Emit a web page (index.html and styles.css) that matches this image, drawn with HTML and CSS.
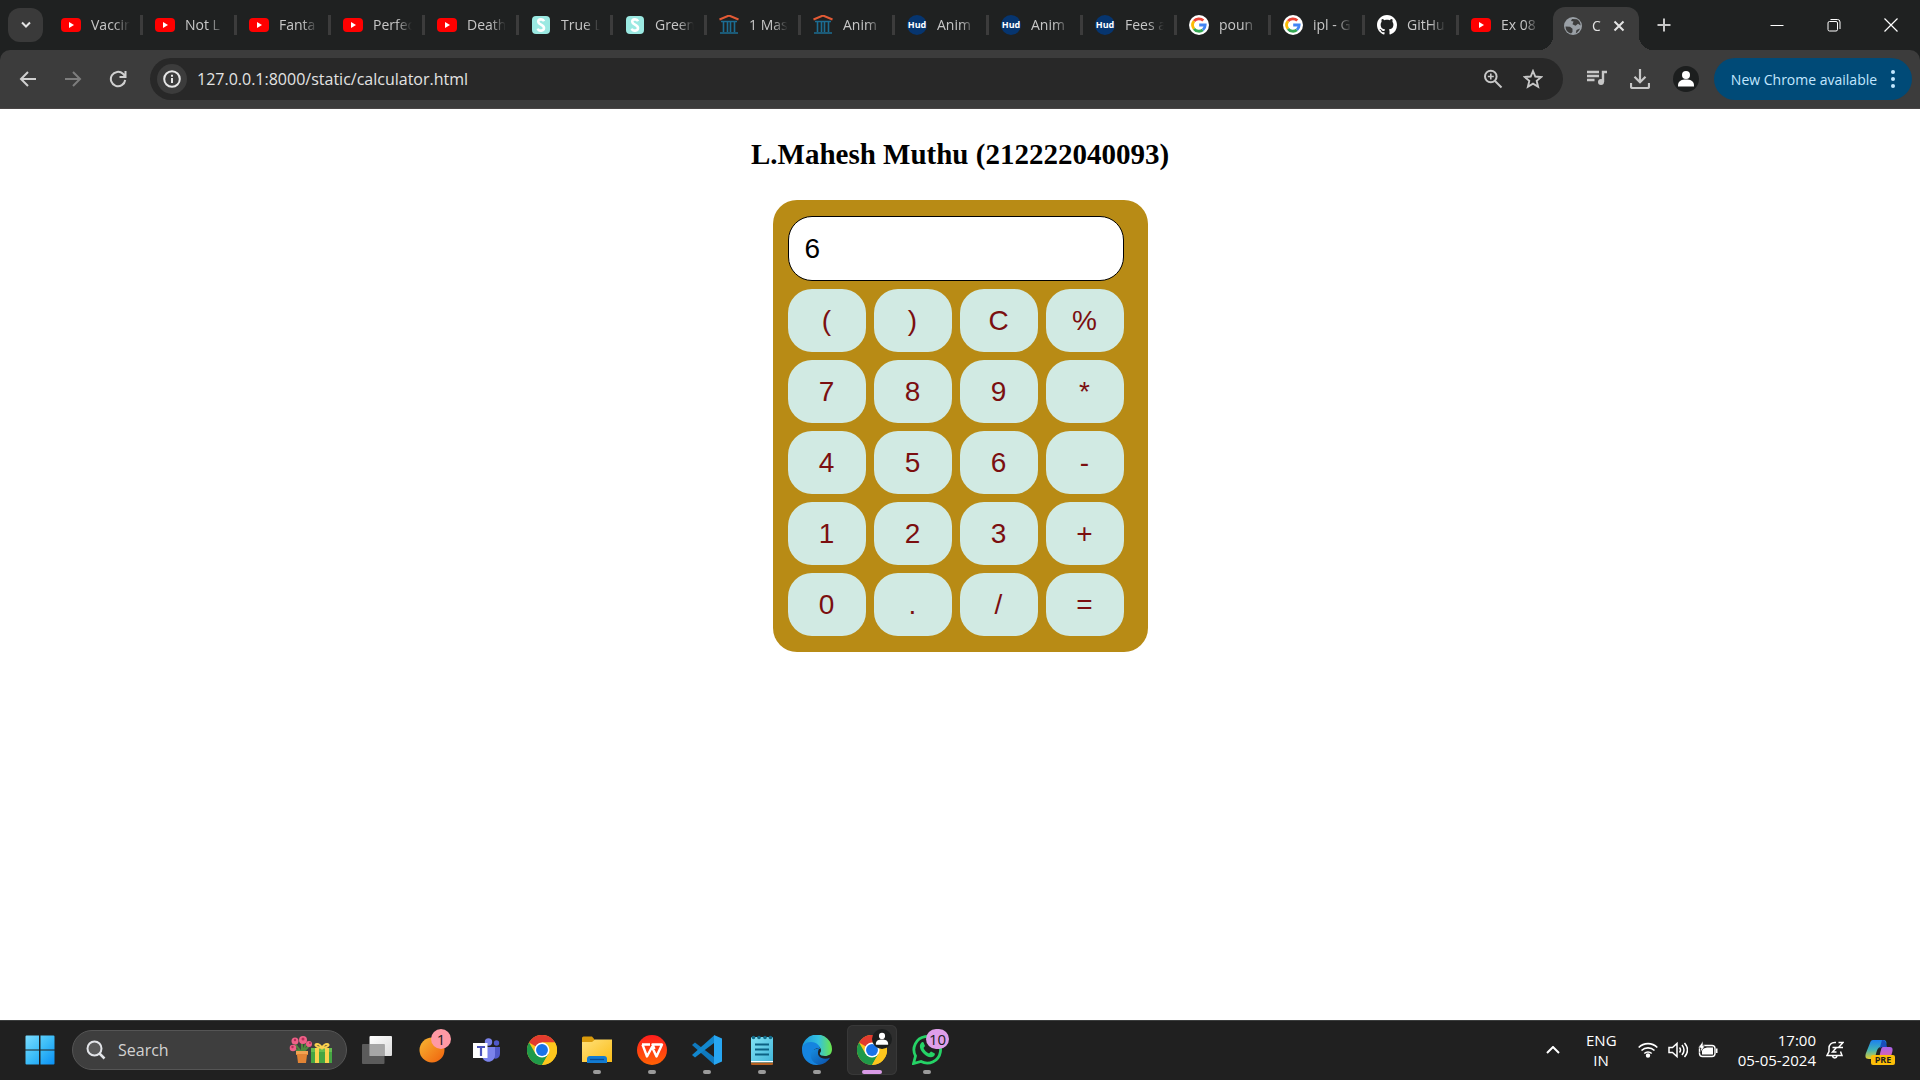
FILE: index.html
```html
<!DOCTYPE html>
<html lang="en">
<head>
<meta charset="utf-8">
<meta name="viewport" content="width=device-width, initial-scale=1">
<title>Calculator</title>
<link rel="stylesheet" href="styles.css">
</head>
<body>
<svg class="sprite" aria-hidden="true">
  <defs>
    <linearGradient id="win" x1="0" y1="0" x2="1" y2="1"><stop offset="0" stop-color="#7bdcff"/><stop offset=".5" stop-color="#3cbdf8"/><stop offset="1" stop-color="#0a90f5"/></linearGradient>
    <linearGradient id="sheet" x1="0" y1="0" x2="1" y2="1"><stop offset="0" stop-color="#fff"/><stop offset="1" stop-color="#dcdcdc"/></linearGradient>
    <linearGradient id="orange" x1="0" y1="0" x2="1" y2="1"><stop offset="0" stop-color="#f7b733"/><stop offset="1" stop-color="#f0600c"/></linearGradient>
    <linearGradient id="folder" x1="0" y1="0" x2="1" y2="1"><stop offset="0" stop-color="#ffe07a"/><stop offset="1" stop-color="#fbbd17"/></linearGradient>
    <linearGradient id="wpsred" x1="0" y1="0" x2="0" y2="1"><stop offset="0" stop-color="#ff1d1d"/><stop offset="1" stop-color="#ff6204"/></linearGradient>
    <linearGradient id="pad" x1="0" y1="0" x2="1" y2="1"><stop offset="0" stop-color="#82e2f4"/><stop offset="1" stop-color="#3fb4d8"/></linearGradient>
    <linearGradient id="edgetop" x1="0" y1="0" x2="1" y2="0"><stop offset="0" stop-color="#1795dc"/><stop offset=".55" stop-color="#35c1e0"/><stop offset="1" stop-color="#6be74a"/></linearGradient>
    <linearGradient id="edgelow" x1="0" y1="0" x2="1" y2="1"><stop offset="0" stop-color="#168de0"/><stop offset="1" stop-color="#0b4fa8"/></linearGradient>
    <linearGradient id="cop1" x1="0" y1="0" x2="0" y2="1"><stop offset="0" stop-color="#1c7ff0"/><stop offset=".5" stop-color="#3fb2b8"/><stop offset="1" stop-color="#e5ce2c"/></linearGradient>
    <linearGradient id="cop2" x1="0" y1="0" x2="0" y2="1"><stop offset="0" stop-color="#a763ee"/><stop offset="1" stop-color="#f4608c"/></linearGradient>
  </defs>
  <symbol id="youtube" viewBox="0 0 20 20"><rect y="3" width="20" height="14" rx="4" fill="#f00"/><path d="M8 7v6l5-3z" fill="#fff"/></symbol>
  <symbol id="scribd" viewBox="0 0 20 20"><rect x="1" y="1" width="18" height="18" rx="4" fill="#9be9e2"/><path d="M13 6.2C12 3.6 7.200 3.800 7.200 6.800 7.200 9.700 13 9.800 13 13c0 3.200-5.200 3.600-6.300.6" fill="none" stroke="#fff" stroke-width="2.600"/></symbol>
  <symbol id="archive" viewBox="0 0 20 20"><path d="M.5 4.500 10 .5l9.500 4" fill="none" stroke="#e35a35" stroke-width="2"/><path d="M2 6.500h16M4.500 7v10M8.500 7v10M11.500 7v10M15.500 7v10M1 18h18" fill="none" stroke="#1c6d93" stroke-width="1.600"/></symbol>
  <symbol id="google" viewBox="0 0 20 20"><circle cx="10" cy="10" r="10" fill="#fff"/><g fill="none" stroke-width="2.800"><path d="M5 6.200A6.200 6.200 0 0 1 14.300 5.600" stroke="#ea4335"/><path d="M5 6.200A6.200 6.200 0 0 0 5 13.800" stroke="#fbbc05"/><path d="M5 13.800A6.200 6.200 0 0 0 13.900 14.800" stroke="#34a853"/><path d="M10.200 10h6A6.200 6.200 0 0 1 13.900 14.800" stroke="#4285f4"/></g></symbol>
  <symbol id="github" viewBox="0 0 16 16"><path fill="#fff" d="M8 0C3.580 0 0 3.580 0 8c0 3.540 2.290 6.530 5.470 7.590.4.070.55-.17.55-.38 0-.19-.01-.82-.01-1.490-2.010.37-2.530-.49-2.690-.94-.09-.23-.48-.94-.82-1.130-.28-.15-.68-.52-.01-.53.630-.01 1.080.58 1.230.82.720 1.210 1.870.87 2.330.66.070-.52.280-.87.510-1.070-1.780-.2-3.640-.89-3.640-3.950 0-.87.310-1.590.82-2.150-.08-.2-.36-1.020.08-2.120 0 0 .67-.21 2.200.82.640-.18 1.320-.27 2-.27s1.360.09 2 .27c1.530-1.040 2.200-.82 2.200-.82.440 1.100.16 1.920.08 2.120.51.560.82 1.270.82 2.150 0 3.070-1.870 3.750-3.650 3.950.29.250.54.730.54 1.480 0 1.070-.01 1.930-.01 2.200 0 .21.150.46.550.38A8.010 8.010 0 0 0 16 8c0-4.420-3.580-8-8-8z"/></symbol>
  <symbol id="globe" viewBox="0 0 20 20"><circle cx="10" cy="10" r="9" fill="#9aa0a6"/><path d="M2.500 10.500l4.500.2 2.500 2v3.300l-1.500 1.400C4.500 16.600 2.500 14 2.500 10.500zM9 3l5 .2c2.500 1.500 3.500 3.800 3.600 6.300l-2.600-1.700-2.500 2-3-1.600 1-2.600L8 5zM17 12.500c-.8 2.300-2.300 3.800-4.200 4.700l.7-3.200z" fill="#3c3c3c"/></symbol>
  <symbol id="chrome" viewBox="0 0 48 48"><circle cx="24" cy="24" r="24" fill="#fdc61d"/><path d="M24 24 3.200 12A24 24 0 0 1 44.800 12H24z" fill="#e33b2e"/><path d="M3.200 12A24 24 0 0 0 24 48L34.400 30 24 24 13.600 30z" fill="#1f9a49"/><path d="M24 48A24 24 0 0 0 44.800 12H24L34.400 30z" fill="#fdc61d"/><circle cx="24" cy="24" r="12" fill="#fff"/><circle cx="24" cy="24" r="9.500" fill="#1a73e8"/></symbol>
  <symbol id="person" viewBox="0 0 26 26"><circle cx="13" cy="13" r="13" fill="#1c1e1e"/><circle cx="13" cy="9" r="4" fill="#fff"/><path d="M5 19.500c0-5 4-6 8-6s8 1 8 6v1H5z" fill="#fff"/></symbol>
</svg>

<header class="browser">
  <div class="tabstrip">
    <button class="tab-search" aria-label="Search tabs"><svg width="12" height="12" viewBox="0 0 12 12"><path d="M2 3.500 6 7.500l4-4" fill="none" stroke="#e3e3e3" stroke-width="2"/></svg></button>
    <nav class="tabs" aria-label="Open tabs">
      <a class="tab" href="#"><svg class="favicon"><use href="#youtube"/></svg><span>Vaccin</span></a>
      <a class="tab" href="#"><svg class="favicon"><use href="#youtube"/></svg><span>Not L</span></a>
      <a class="tab" href="#"><svg class="favicon"><use href="#youtube"/></svg><span>Fanta</span></a>
      <a class="tab" href="#"><svg class="favicon"><use href="#youtube"/></svg><span>Perfec</span></a>
      <a class="tab" href="#"><svg class="favicon"><use href="#youtube"/></svg><span>Death</span></a>
      <a class="tab" href="#"><svg class="favicon"><use href="#scribd"/></svg><span>True L</span></a>
      <a class="tab" href="#"><svg class="favicon"><use href="#scribd"/></svg><span>Green</span></a>
      <a class="tab" href="#"><svg class="favicon"><use href="#archive"/></svg><span>1 Mas</span></a>
      <a class="tab" href="#"><svg class="favicon"><use href="#archive"/></svg><span>Anim</span></a>
      <a class="tab" href="#"><b class="hud">Hud</b><span>Anim</span></a>
      <a class="tab" href="#"><b class="hud">Hud</b><span>Anim</span></a>
      <a class="tab" href="#"><b class="hud">Hud</b><span>Fees a</span></a>
      <a class="tab" href="#"><svg class="favicon"><use href="#google"/></svg><span>poun</span></a>
      <a class="tab" href="#"><svg class="favicon"><use href="#google"/></svg><span>ipl - G</span></a>
      <a class="tab" href="#"><svg class="favicon"><use href="#github"/></svg><span>GitHu</span></a>
      <a class="tab" href="#"><svg class="favicon"><use href="#youtube"/></svg><span>Ex 08</span></a>
    </nav>
    <div class="tab-active"><svg class="favicon"><use href="#globe"/></svg><span>C</span><button aria-label="Close tab"><svg width="12" height="12" viewBox="0 0 12 12"><path d="m1.500 1.500 9 9m0-9-9 9" stroke="#e3e3e3" stroke-width="2"/></svg></button></div>
    <button class="new-tab" aria-label="New tab"><svg width="14" height="14" viewBox="0 0 14 14"><path d="M7 .5v13M.5 7h13" stroke="#c7c7c7" stroke-width="2"/></svg></button>
    <div class="window-controls">
      <button aria-label="Minimize"><svg width="14" height="14" viewBox="0 0 14 14"><path d="M.5 7.500h13" stroke="#fff"/></svg></button>
      <button aria-label="Restore"><svg width="14" height="14" viewBox="0 0 14 14" fill="none" stroke="#fff"><rect x="1" y="3.500" width="9.500" height="9.500" rx="1.500"/><path d="M3.500 1.500h7a2.500 2.500 0 0 1 2.500 2.500v7"/></svg></button>
      <button aria-label="Close"><svg width="14" height="14" viewBox="0 0 14 14"><path d="m.5.5 13 13m0-13-13 13" stroke="#fff" stroke-width="1.200"/></svg></button>
    </div>
  </div>

  <div class="toolbar">
    <div class="nav-buttons">
      <button aria-label="Back"><svg width="18" height="18" viewBox="0 0 18 18"><path d="M17 9H2.500M9 2 2 9l7 7" fill="none" stroke="#d0d0d0" stroke-width="2"/></svg></button>
      <button aria-label="Forward"><svg width="18" height="18" viewBox="0 0 18 18"><path d="M1 9h14.500M9 2l7 7-7 7" fill="none" stroke="#7d7d7d" stroke-width="2"/></svg></button>
      <button aria-label="Reload"><svg width="18" height="18" viewBox="0 0 18 18"><path d="M16.200 10A7.200 7.200 0 1 1 14 3.800L16 6M16.500 1v6h-6" fill="none" stroke="#d0d0d0" stroke-width="2"/></svg></button>
    </div>
    <div class="omnibox">
      <button class="site-info" aria-label="View site information"><svg width="18" height="18" viewBox="0 0 18 18"><circle cx="9" cy="9" r="7.800" fill="none" stroke="#e6e6e6" stroke-width="2"/><path d="M9 8v5M9 4.700v2" stroke="#e6e6e6" stroke-width="2"/></svg></button>
      <input type="text" aria-label="Address" value="127.0.0.1:8000/static/calculator.html">
      <button aria-label="Zoom"><svg width="20" height="20" viewBox="0 0 20 20" fill="none" stroke="#c7c7c7" stroke-width="2"><circle cx="7.800" cy="7.500" r="5.800"/><path d="m12 12 6.500 6.500"/><path d="M7.800 4.500v6M4.800 7.500h6" stroke-width="1.600"/></svg></button>
      <button aria-label="Bookmark this tab"><svg width="20" height="20" viewBox="0 0 20 20"><path d="m10 2 2.300 5.500 6 .5-4.600 3.900 1.400 5.800-5.100-3.100-5.100 3.100 1.400-5.800L1.700 8l6-.5z" fill="none" stroke="#c7c7c7" stroke-width="1.900"/></svg></button>
    </div>
    <div class="toolbar-actions">
      <button aria-label="Media controls"><svg width="20" height="18" viewBox="0 0 20 18"><path d="M0 2h12M0 6h12M0 10h7.500M20 2h-4v10" fill="none" stroke="#c7c7c7" stroke-width="2.400"/><circle cx="14" cy="12" r="3" fill="#c7c7c7"/></svg></button>
      <button aria-label="Downloads"><svg width="20" height="20" viewBox="0 0 20 20"><path d="M10 0v13M4.500 7.800l5.500 5.500 5.500-5.500M1 14v3.500a1.500 1.500 0 0 0 1.500 1.500h15a1.500 1.500 0 0 0 1.500-1.500V14" fill="none" stroke="#c7c7c7" stroke-width="2.200"/></svg></button>
      <button aria-label="Profile"><svg width="26" height="26"><use href="#person"/></svg></button>
    </div>
    <button class="update">New Chrome available <svg width="4" height="20" viewBox="0 0 4 20" fill="#c2e7ff"><circle cx="2" cy="3" r="2"/><circle cx="2" cy="10" r="2"/><circle cx="2" cy="17" r="2"/></svg></button>
  </div>
</header>

<main class="page">
  <h2>L.Mahesh Muthu (212222040093)</h2>
  <form class="calculator">
    <input class="display" type="text" aria-label="Result" value="6">
    <button type="button">(</button><button type="button">)</button><button type="button">C</button><button type="button">%</button>
    <button type="button">7</button><button type="button">8</button><button type="button">9</button><button type="button">*</button>
    <button type="button">4</button><button type="button">5</button><button type="button">6</button><button type="button">-</button>
    <button type="button">1</button><button type="button">2</button><button type="button">3</button><button type="button">+</button>
    <button type="button">0</button><button type="button">.</button><button type="button">/</button><button type="button">=</button>
  </form>
</main>

<footer class="taskbar">
  <button class="app" aria-label="Start"><svg width="30" height="30" viewBox="0 0 30 30"><path d="M1.500.5H14v14H.5v-13a1 1 0 0 1 1-1zM15.500.5h13a1 1 0 0 1 1 1v13h-14zM.5 15.500H14v14H1.500a1 1 0 0 1-1-1zM15.500 15.500h14v13a1 1 0 0 1-1 1h-13z" fill="url(#win)"/></svg></button>
  <label class="search">
    <svg width="20" height="20" viewBox="0 0 20 20" fill="none" stroke="#e2e4e8" stroke-width="2"><circle cx="8.500" cy="8.500" r="7" fill="#5a5a5a"/><path d="m13.500 13.500 5 5" stroke-width="2.500"/></svg>
    <input type="text" placeholder="Search" aria-label="Search">
    <svg width="44" height="28" viewBox="0 0 44 28"><path d="M13 17 6 8M13 17V6M13 17l7-7M13 17 4 12M13 17l4-9" stroke="#4d8a3d" stroke-width="2"/><g fill="#ee6188"><circle cx="6" cy="5" r="3.500"/><circle cx="14" cy="4" r="4"/><circle cx="20" cy="8" r="3"/><circle cx="4" cy="12" r="3.300"/></g><g fill="#b52e5b"><circle cx="6" cy="4" r="1.200"/><circle cx="14" cy="3" r="1.500"/><circle cx="3.500" cy="11" r="1.200"/><circle cx="21" cy="7" r="1"/></g><path d="M7 15h12v4h-1l-1 8H9l-1-8H7z" fill="#e28435"/><path d="M7 15h12v3H7z" fill="#f1a252"/><path d="M22 12h21v15H22z" fill="#45a543"/><path d="M22 12h21v4H22z" fill="#64bd50"/><path d="M26 12h4v15h-4zM36 12h4v15h-4z" fill="#fbd24e"/><path d="M33 12c-7-1-8-4-5-4s5 4 5 4 2-4 5-4 2 3-5 4z" fill="none" stroke="#fbd24e" stroke-width="2"/></svg>
  </label>
  <nav class="apps" aria-label="Taskbar">
    <button class="app" aria-label="Task view"><svg width="30" height="28" viewBox="0 0 30 28"><rect x="7.500" width="22.500" height="20" rx="1" fill="url(#sheet)"/><rect y="8" width="22.500" height="20" rx="1" fill="#666" fill-opacity=".85"/><path d="M7.500 8h15v12h-15z" fill="#a6a6a6"/></svg></button>
    <button class="app" aria-label="Widgets"><svg width="26" height="26" viewBox="0 0 26 26"><circle cx="13" cy="13" r="12.500" fill="url(#orange)"/></svg><span class="badge badge-pink">1</span></button>
    <button class="app" aria-label="Teams"><svg width="28" height="24" viewBox="0 0 28 24"><circle cx="15.500" cy="4" r="3.700" fill="#7b83eb"/><circle cx="23.500" cy="5" r="2.700" fill="#5059c9"/><path d="M18 9h9v6c0 6-5 7-8 4z" fill="#5059c9"/><path d="M9 9h13v8c0 9-13 9-13 0z" fill="#7b83eb"/><path d="M0 5h14.500v15H0z" fill="#fff"/><path d="M4 9h8M8 9v9" stroke="#4b53bc" stroke-width="2.200"/></svg></button>
    <button class="app" aria-label="Chrome"><svg width="30" height="30"><use href="#chrome"/></svg></button>
    <button class="app open" aria-label="File Explorer"><svg width="30" height="28" viewBox="0 0 30 28"><path d="M0 2a1.500 1.500 0 0 1 1.500-1.500H10L13 4H20v8H0z" fill="#d99a0b"/><path d="M0 6h10l3-2.500h17V26H0z" fill="url(#folder)"/><path d="M5 27v-4a3 3 0 0 1 3-3h14a3 3 0 0 1 3 3v4z" fill="#127bd2"/><path d="M8 23.500h14" stroke="#074b94" stroke-width="1.300"/></svg></button>
    <button class="app open" aria-label="WPS Office"><svg width="30" height="30" viewBox="0 0 30 30"><circle cx="15" cy="15" r="15" fill="url(#wpsred)"/><path d="M5 9.500h8M5.500 9.500l4.500 12 5-9.500 4.500 9.500L25 9.500h-9.500l2 4.500" fill="none" stroke="#fff" stroke-width="2.400" stroke-linejoin="round"/></svg></button>
    <button class="app open" aria-label="Visual Studio Code"><svg width="30" height="30" viewBox="0 0 30 30"><path d="M0 10 3 7.500 22 22v7.500z" fill="#0f79be"/><path d="M0 20 3 22.500 22 8V.5z" fill="#1287ce"/><path d="M22 0l8 3.500v23L22 30z" fill="#27a6f2"/></svg></button>
    <button class="app open" aria-label="Notepad"><svg width="24" height="30" viewBox="0 0 24 30"><rect x="1" y="2" width="22" height="27" rx="1" fill="url(#pad)"/><path d="M1 26h22v1H1z" fill="#fff"/><path d="M1 27.500h22V29a1 1 0 0 1-1 1H2a1 1 0 0 1-1-1z" fill="#b55f1f"/><path d="M5 9.500h14M5 14.500h14M5 19.500h14" stroke="#0c6183" stroke-width="1.800"/><g fill="#136a88"><circle cx="3.500" cy="2.500" r="1.800"/><circle cx="9" cy="2.500" r="1.800"/><circle cx="15" cy="2.500" r="1.800"/><circle cx="20.500" cy="2.500" r="1.800"/></g></svg></button>
    <button class="app open" aria-label="Edge"><svg width="30" height="30" viewBox="0 0 30 30"><path d="M0 15a15 15 0 0 1 30-1c0 5-3 7-7 7-3 0-6-1-5-3 3-4-1-8-6-8-6 0-10 3-12 5z" fill="url(#edgetop)"/><path d="M0 15c0-5 4-8 9-8 6 0 9 4 9 7-5-2-9 2-8 7 1 4 4 8 8 8.500C8 32 0 24 0 15z" fill="#1584df"/><path d="M10 16c-3 4-1 12 7 13.800 5-.5 9-3.500 11-7-7 3-15-1-11-9-3-.5-5.500.5-7 2.200z" fill="url(#edgelow)"/></svg></button>
    <button class="app open current" aria-label="Chrome, current window"><svg width="30" height="30"><use href="#chrome"/></svg><svg class="profile" width="20" height="20"><use href="#person"/></svg></button>
    <button class="app open" aria-label="WhatsApp"><svg width="30" height="30" viewBox="0 0 30 30"><path d="M1.500 28.500 3.500 21A13.300 13.300 0 1 1 9 26.500z" fill="none" stroke="#25d366" stroke-width="2.800"/><path d="M9 8c1.500-1.500 2.500-1 3 .5l1 2.500-1.500 2c1 2.500 3 4.500 5.500 5.500l2-2 3 1.500c1.500.5 1 2.500-.5 3.500-3 2-7 0-10-3C8.500 15.500 6.500 11 9 8z" fill="#25d366"/></svg><span class="badge badge-violet">10</span></button>
  </nav>
  <div class="tray">
    <button class="chevron" aria-label="Show hidden icons"><svg width="14" height="8" viewBox="0 0 14 8"><path d="m1 7 6-6 6 6" fill="none" stroke="#fff" stroke-width="2"/></svg></button>
    <button class="language">ENG<br>IN</button>
    <button class="status" aria-label="Network, sound and battery">
      <svg width="20" height="16" viewBox="0 0 20 16" fill="none" stroke="#fff" stroke-width="1.600"><path d="M.7 5.500a13 13 0 0 1 18.600 0M3.500 8.500a9.300 9.300 0 0 1 13 0M6.300 11.500a5.300 5.300 0 0 1 7.400 0"/><circle cx="10" cy="13.500" r="1.400" fill="#fff"/></svg>
      <svg width="20" height="18" viewBox="0 0 20 18" fill="none" stroke="#fff" stroke-width="1.500"><path d="M1 6.500h3.500L9 2.500v13l-4.500-4H1zM11.500 6.500q2 2.500 0 5M14 4q4 5 0 10M16.500 2q6 7 0 14"/></svg>
      <svg width="20" height="18" viewBox="0 0 20 18"><rect x="1.500" y="4.500" width="15.500" height="11" rx="3" fill="none" stroke="#fff" stroke-width="1.400"/><path d="M4 8 9 6.500h6v7H4zM18 7.500h1.500v4.500H18z" fill="#fff"/><path d="M5 0 0 7h3L2 12l5-7H5z" fill="#fff" stroke="#202020" stroke-width=".6"/></svg>
    </button>
    <button class="clock">17:00<br>05-05-2024</button>
    <button class="bell" aria-label="Notifications"><svg width="18" height="18" viewBox="0 0 18 18" fill="none" stroke="#fff" stroke-width="1.500"><path d="M10 1.500C5 1 3 4 3 7v3.500L1 14.500h15l-1.500-4M6.500 15c.5 2.500 4 2.500 4.500 0M6.500 6.500h4L6.500 11h4M12.500 1.500h4.500L12.500 6.500H17"/></svg></button>
    <button class="copilot" aria-label="Copilot preview"><svg width="30" height="22" viewBox="0 0 30 22"><path d="M8 1h10c3 0 4 2 3 5l-2 2h-3c-3 0-4 3-5 7-1 3-2 5-5 5H4c-4 0-4-3-3-6L5 4c.5-2 1.500-3 3-3z" fill="url(#cop1)"/><path d="M17 1c4 0 4 3 5 7h-5c-1 0-2 1-2.500 2z" fill="#194ebd"/><path d="M18 8h7c3 0 3 3 2 6l-1 3c-1 4-3 5-6 5h-8c3-2 2-5 4-11 .3-2 1-3 2-3z" fill="url(#cop2)"/></svg><span>PRE</span></button>
  </div>
</footer>
</body>
</html>
```
FILE: styles.css
```css
* {
  box-sizing: border-box;
}

body {
  margin: 0;
  min-height: 100vh;
  display: flex;
  flex-direction: column;
  background: #fff;
  font-family: "Open Sans", "Noto Sans", sans-serif;
}

button {
  padding: 0;
  border: 0;
  background: none;
  color: inherit;
  font: inherit;
}

input {
  min-width: 0;
  border: 0;
  outline: 0;
  background: none;
  color: inherit;
  font: inherit;
}

svg {
  display: block;
  flex: none;
}

.sprite {
  position: absolute;
  width: 0;
  height: 0;
}

/* Tab strip */

.browser {
  background: #1f2121;
}

.tabstrip {
  height: 50px;
  display: flex;
  align-items: center;
  padding-left: 8px;
}

.tab-search {
  width: 35px;
  height: 34px;
  border-radius: 12px;
  background: #3a3a3a;
  display: grid;
  place-items: center;
}

.tabs {
  flex: 1;
  min-width: 0;
  display: grid;
  grid-template-columns: repeat(16, minmax(0, 1fr));
  margin-left: 6px;
}

.tab {
  display: flex;
  align-items: center;
  gap: 10px;
  height: 20px;
  padding: 0 10px 0 12px;
  border-right: 3px solid #3c3c3c;
  color: #c7c7c7;
  font-size: 14px;
  line-height: 22px;
  text-decoration: none;
}

.tab:last-child {
  border-right-color: transparent;
}

.tab span,
.tab-active span {
  flex: 1;
  overflow: hidden;
  white-space: nowrap;
  -webkit-mask-image: linear-gradient(to right, #000 60%, transparent);
  mask-image: linear-gradient(to right, #000 60%, transparent);
}

.favicon {
  width: 20px;
  height: 20px;
}

.hud {
  width: 20px;
  height: 20px;
  border-radius: 50%;
  background: #06356f;
  color: #fff;
  font-size: 9px;
  line-height: 20px;
  text-align: center;
}

.tab-active {
  position: relative;
  align-self: flex-end;
  width: 86px;
  height: 43px;
  display: flex;
  align-items: center;
  gap: 9px;
  padding: 0 14px 6px 10px;
  border-radius: 12px 12px 0 0;
  background: #3c3c3c;
  color: #e3e3e3;
  font-size: 14px;
}

.tab-active::before,
.tab-active::after {
  content: "";
  position: absolute;
  bottom: 0;
  width: 14px;
  height: 14px;
}

.tab-active::before {
  right: 100%;
  background: radial-gradient(circle at 0 0, transparent 14px, #3c3c3c 14px);
}

.tab-active::after {
  left: 100%;
  background: radial-gradient(circle at 100% 0, transparent 14px, #3c3c3c 14px);
}

.new-tab {
  width: 50px;
  display: grid;
  place-items: center;
}

.window-controls {
  display: flex;
  margin-left: 59px;
  padding-right: 1px;
}

.window-controls button {
  width: 57px;
  height: 48px;
  display: grid;
  place-items: center;
}

/* Toolbar */

.toolbar {
  height: 59px;
  display: flex;
  align-items: center;
  padding: 0 8px 0 5px;
  border-bottom: 1px solid #4a4646;
  border-radius: 10px 10px 0 0;
  background: #3c3c3c;
}

.nav-buttons {
  display: flex;
  margin-right: 10px;
}

.nav-buttons button {
  width: 45px;
  height: 42px;
  display: grid;
  place-items: center;
}

.omnibox {
  flex: 1;
  min-width: 0;
  height: 42px;
  display: flex;
  align-items: center;
  gap: 20px;
  padding: 0 20px 0 7px;
  border-radius: 21px;
  background: #282828;
}

.omnibox input {
  flex: 1;
  padding: 0;
  color: #e3e3e3;
  font-size: 16px;
}

.site-info {
  width: 30px;
  height: 30px;
  margin-right: -10px;
  border-radius: 50%;
  background: #3c3c3c;
  display: grid;
  place-items: center;
}

.toolbar-actions {
  display: flex;
  align-items: center;
  gap: 23px;
  margin: 0 15px 0 24px;
}

.update {
  width: 198px;
  height: 42px;
  display: flex;
  align-items: center;
  justify-content: center;
  gap: 14px;
  border-radius: 21px;
  background: #004a77;
  color: #c2e7ff;
  font-size: 14px;
  white-space: nowrap;
}

/* Calculator page */

.page {
  flex: 1;
  display: flex;
  flex-direction: column;
  align-items: center;
  gap: 29px;
  padding: 29px 16px;
}

.page h2 {
  margin: 0;
  color: #000;
  font: bold 29px/33px "Liberation Serif", serif;
}

.calculator {
  display: grid;
  grid-template-columns: repeat(4, 78px);
  grid-template-rows: 65px;
  grid-auto-rows: 63px;
  gap: 8px;
  padding: 16px 24px 16px 15px;
  border-radius: 24px;
  background: #b88b15;
  font: 28px/32px "Liberation Sans", Arial, sans-serif;
}

.calculator button {
  border-radius: 24px;
  background: #d1eae3;
  color: #7b0f10;
}

.calculator .display {
  grid-column: 1 / -1;
  padding: 0 16px;
  border: 1px solid #000;
  border-radius: 24px;
  background: #fff;
  color: #000;
}

/* Taskbar */

.taskbar {
  height: 60px;
  display: flex;
  align-items: center;
  padding: 0 25px 1px 15px;
  border-top: 1px solid #3b3d3d;
  background: #202020;
  color: #fff;
}

.app {
  position: relative;
  width: 50px;
  height: 50px;
  display: grid;
  place-items: center;
  border-radius: 6px;
}

.search {
  width: 275px;
  height: 40px;
  display: flex;
  align-items: center;
  gap: 12px;
  margin: 0 5px 0 7px;
  padding: 0 13px;
  border: 1px solid #555;
  border-radius: 20px;
  background: #3e3e3e;
}

.search input {
  flex: 1;
  padding: 0;
  font-size: 16px;
}

.search input::placeholder {
  color: #d2d2d2;
  opacity: 1;
}

.apps {
  display: flex;
  gap: 5px;
}

.open::after {
  content: "";
  position: absolute;
  bottom: 1px;
  left: 21px;
  width: 8px;
  height: 4px;
  border-radius: 2px;
  background: #9a9a9a;
}

.current {
  background: #2e2e2e;
  box-shadow: inset 0 0 0 1px #383838;
}

.current::after {
  left: 15px;
  width: 20px;
  background: #d99be6;
}

.profile {
  position: absolute;
  top: 4px;
  right: 5px;
}

.badge {
  position: absolute;
  top: 4px;
  height: 20px;
  border-radius: 10px;
  color: #1c1c1c;
  font-size: 15px;
  line-height: 20px;
}

.badge-pink {
  left: 24px;
  width: 20px;
  background: #ff99a4;
}

.badge-violet {
  left: 24px;
  width: 23px;
  background: #df9fea;
}

.tray {
  display: flex;
  align-items: center;
  margin-left: auto;
  font-size: 15px;
  line-height: 20px;
}

.chevron {
  margin-right: 26px;
}

.language {
  width: 30px;
  margin-right: 22px;
}

.status {
  display: flex;
  align-items: center;
  gap: 10px;
}

.clock {
  width: 98px;
  text-align: right;
}

.bell {
  margin: 0 21px 0 10px;
}

.copilot {
  width: 30px;
  height: 30px;
  position: relative;
}

.copilot span {
  position: absolute;
  right: 0;
  bottom: 0;
  width: 24px;
  height: 10px;
  border-radius: 2px;
  background: #fbbd08;
  color: #1c1c1c;
  font-size: 9px;
  font-weight: 700;
  line-height: 10px;
  text-align: center;
}
```
